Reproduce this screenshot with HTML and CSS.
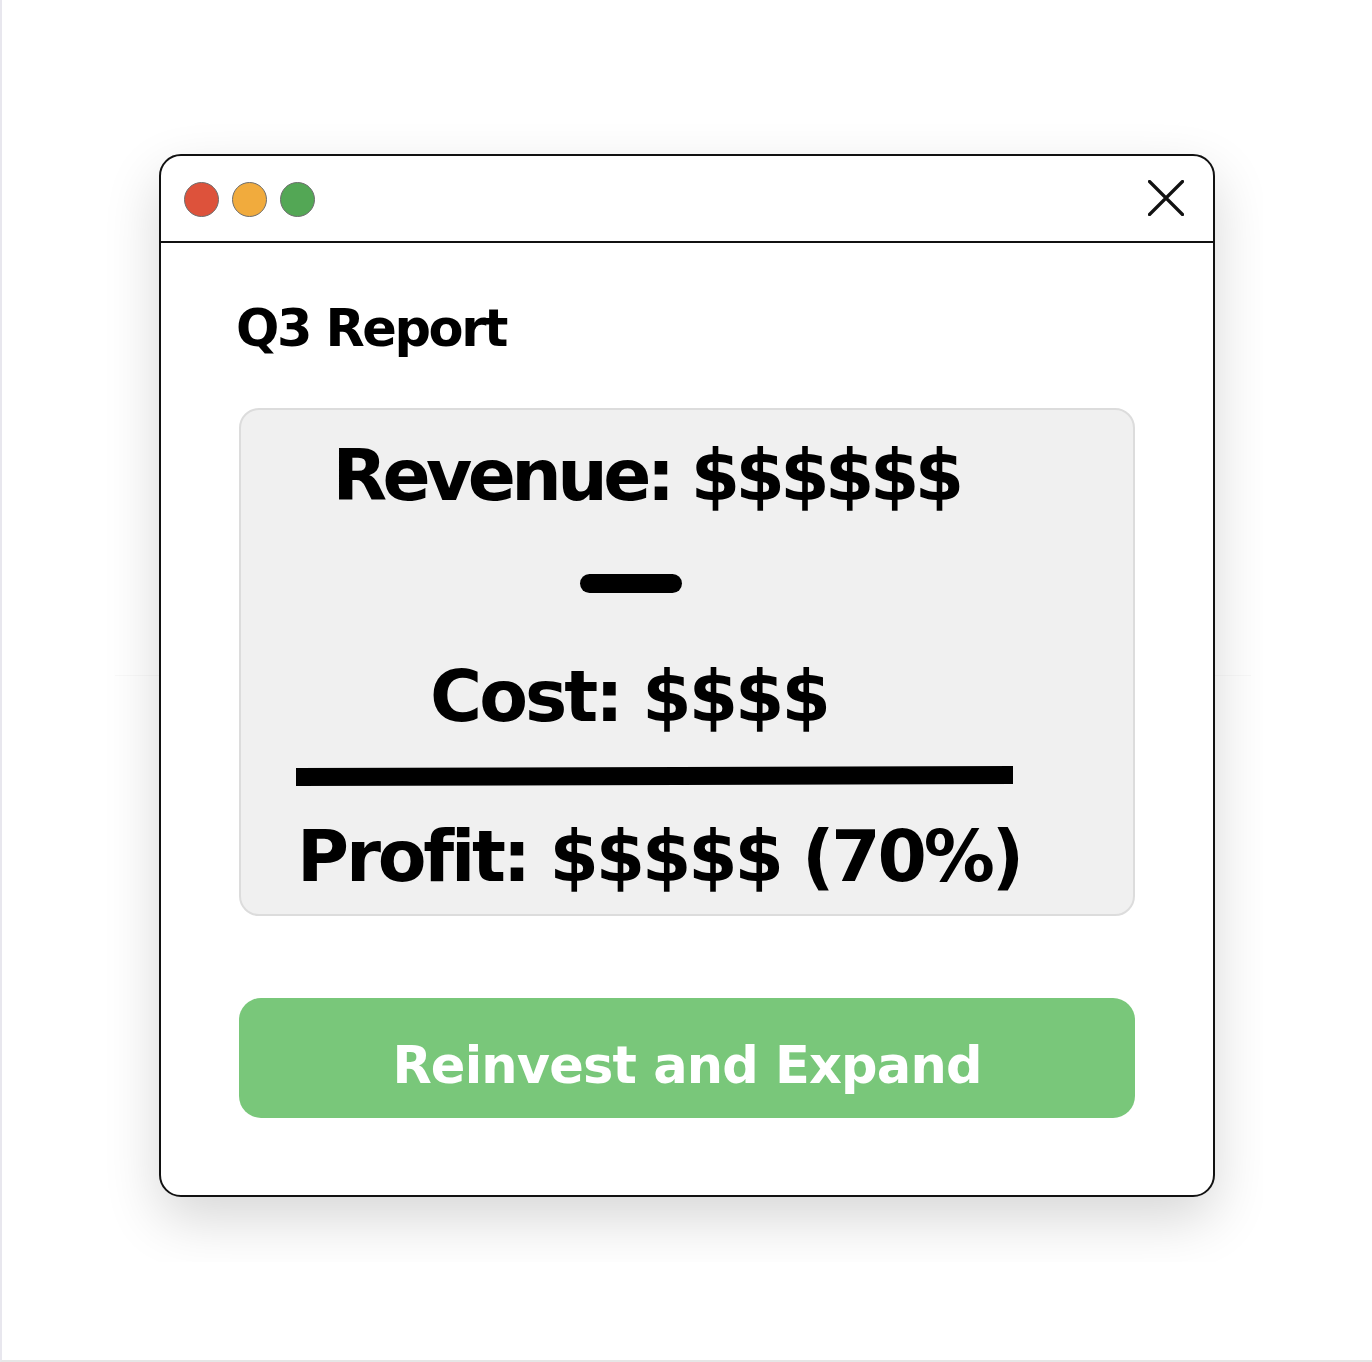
FILE: index.html
```html
<!DOCTYPE html>
<html lang="en">
<head>
<meta charset="utf-8">
<title>Q3 Report</title>
<link rel="stylesheet" href="styles.css">
</head>
<body>
<div class="page">
  <div class="stage">
    <div class="window">
      <div class="titlebar">
        <div class="dots">
          <span class="dot dot-red"></span>
          <span class="dot dot-orange"></span>
          <span class="dot dot-green"></span>
        </div>
        <svg class="close" width="36" height="36" viewBox="0 0 36 36" aria-label="Close">
          <path d="M1.5 1.5 L34.5 34.5 M34.5 1.5 L1.5 34.5" stroke="#111" stroke-width="3.2" stroke-linecap="round" fill="none"/>
        </svg>
      </div>
      <div class="content">
        <h1 class="title">Q3 Report</h1>
        <div class="report">
          <div class="line line-revenue">Revenue: $$$$$$</div>
          <div class="minus"></div>
          <div class="line line-cost">Cost: $$$$</div>
          <div class="rule"></div>
          <div class="line line-profit">Profit: $$$$$ (70%)</div>
        </div>
        <button class="cta">Reinvest and Expand</button>
      </div>
    </div>
  </div>
</div>
</body>
</html>
```

FILE: styles.css
```css
html, body {
  margin: 0;
  padding: 0;
  background: #ffffff;
}

.page {
  box-sizing: border-box;
  width: 1372px;
  height: 1362px;
  border-left: 2px solid #e8e7ee;
  border-bottom: 2px solid #e6e6e6;
  padding: 100px 0 0 93px;
  font-family: "DejaVu Sans", "Liberation Sans", sans-serif;
  font-weight: bold;
  color: #000;
}

.stage {
  position: relative;
  box-sizing: border-box;
  width: 1168px;
  height: 1162px;
  padding: 54px 48px 65px 64px;
  overflow: hidden;
}

.stage::before {
  content: "";
  position: absolute;
  left: 20px;
  right: 12px;
  top: 575px;
  height: 1px;
  background: rgba(0, 0, 0, 0.025);
}

.window {
  position: relative;
  box-sizing: border-box;
  width: 1056px;
  height: 1043px;
  background: #fff;
  border: 2px solid #111;
  border-radius: 22px;
  box-shadow: 0 22px 55px rgba(0, 0, 0, 0.16);
  display: flex;
  flex-direction: column;
}

.titlebar {
  height: 85px;
  border-bottom: 2px solid #111;
  display: flex;
  align-items: center;
  justify-content: space-between;
  padding: 0 29px 0 23px;
}

.dots {
  display: flex;
  gap: 13px;
  padding-top: 1px;
}

.dot {
  box-sizing: border-box;
  width: 35px;
  height: 35px;
  border-radius: 50%;
  border: 1px solid #6e6e6e;
}

.dot-red { background: #dd523b; }
.dot-orange { background: #f1ab3d; }
.dot-green { background: #53a755; }

.close {
  display: block;
  margin-top: -2px;
}

.content {
  padding: 60px 78px 0;
}

.title {
  margin: 0 0 0 -3px;
  font-size: 51px;
  line-height: 51px;
  font-weight: bold;
  letter-spacing: -2.4px;
}

.report {
  box-sizing: border-box;
  margin-top: 54px;
  height: 508px;
  background: #f0f0f0;
  border: 2px solid #dcdcdc;
  border-radius: 20px;
  padding: 30px 0 22px;
}

.line {
  font-size: 71px;
  line-height: 71px;
  text-align: center;
  white-space: nowrap;
}

.line-revenue {
  padding-right: 82px;
  letter-spacing: -4.6px;
}

.line-cost {
  margin-top: 68px;
  padding-right: 116px;
  letter-spacing: -3px;
}

.line-profit {
  margin-top: 36px;
  padding-right: 56px;
  letter-spacing: -3.2px;
}

.minus {
  width: 102px;
  height: 19px;
  border-radius: 10px;
  background: #000;
  margin: 63px 0 0 339px;
}

.rule {
  width: 717px;
  height: 18px;
  background: #000;
  margin: 35px 0 0 55px;
  transform: rotate(-0.15deg);
}

.cta {
  box-sizing: border-box;
  display: flex;
  align-items: center;
  justify-content: center;
  width: 100%;
  height: 120px;
  margin-top: 82px;
  padding: 15px 0 0;
  border: none;
  border-radius: 22px;
  background: #79c77a;
  color: #fff;
  font-family: "DejaVu Sans", "Liberation Sans", sans-serif;
  font-weight: bold;
  font-size: 51px;
  line-height: 51px;
  letter-spacing: -0.8px;
}
```
